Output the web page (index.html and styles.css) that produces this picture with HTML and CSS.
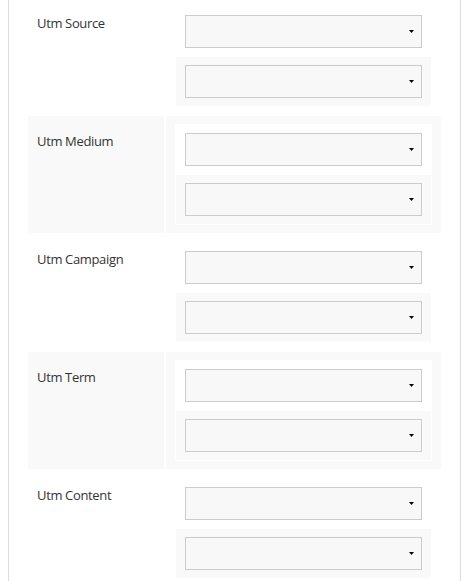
FILE: index.html
```html
<!DOCTYPE html>
<html lang="en">
<head>
<meta charset="utf-8">
<title>UTM fields</title>
<link rel="stylesheet" href="styles.css">
</head>
<body>
<div class="panel">
  <div class="rows">
    <div class="row">
      <div class="label">Utm Source</div>
      <div class="value">
        <div class="subs">
          <div class="sub"><div class="select"><svg class="caret" width="5" height="3" viewBox="0 0 5 3"><path d="M0 0H5L2.5 3Z"/></svg></div></div>
          <div class="sub"><div class="select"><svg class="caret" width="5" height="3" viewBox="0 0 5 3"><path d="M0 0H5L2.5 3Z"/></svg></div></div>
        </div>
      </div>
    </div>
    <div class="row">
      <div class="label">Utm Medium</div>
      <div class="value">
        <div class="subs">
          <div class="sub"><div class="select"><svg class="caret" width="5" height="3" viewBox="0 0 5 3"><path d="M0 0H5L2.5 3Z"/></svg></div></div>
          <div class="sub"><div class="select"><svg class="caret" width="5" height="3" viewBox="0 0 5 3"><path d="M0 0H5L2.5 3Z"/></svg></div></div>
        </div>
      </div>
    </div>
    <div class="row">
      <div class="label">Utm Campaign</div>
      <div class="value">
        <div class="subs">
          <div class="sub"><div class="select"><svg class="caret" width="5" height="3" viewBox="0 0 5 3"><path d="M0 0H5L2.5 3Z"/></svg></div></div>
          <div class="sub"><div class="select"><svg class="caret" width="5" height="3" viewBox="0 0 5 3"><path d="M0 0H5L2.5 3Z"/></svg></div></div>
        </div>
      </div>
    </div>
    <div class="row">
      <div class="label">Utm Term</div>
      <div class="value">
        <div class="subs">
          <div class="sub"><div class="select"><svg class="caret" width="5" height="3" viewBox="0 0 5 3"><path d="M0 0H5L2.5 3Z"/></svg></div></div>
          <div class="sub"><div class="select"><svg class="caret" width="5" height="3" viewBox="0 0 5 3"><path d="M0 0H5L2.5 3Z"/></svg></div></div>
        </div>
      </div>
    </div>
    <div class="row">
      <div class="label">Utm Content</div>
      <div class="value">
        <div class="subs">
          <div class="sub"><div class="select"><svg class="caret" width="5" height="3" viewBox="0 0 5 3"><path d="M0 0H5L2.5 3Z"/></svg></div></div>
          <div class="sub"><div class="select"><svg class="caret" width="5" height="3" viewBox="0 0 5 3"><path d="M0 0H5L2.5 3Z"/></svg></div></div>
        </div>
      </div>
    </div>
  </div>
</div>
</body>
</html>
```

FILE: styles.css
```css
html, body {
  margin: 0;
  padding: 0;
  background: #fff;
}
body {
  font-family: "Open Sans", "Liberation Sans", sans-serif;
  color: #333;
  overflow: hidden;
}
.panel {
  margin-left: 8px;
  width: 453px;
  box-sizing: border-box;
  min-height: 100vh;
  border-left: 1px solid #ddd;
  border-right: 1px solid #ddd;
  padding: 0 19px;
}
.rows {
  margin-top: -2px;
  display: flex;
  flex-direction: column;
  gap: 1px;
}
.row {
  display: flex;
  gap: 2px;
}
.label {
  width: 136px;
  box-sizing: border-box;
  padding: 16px 9px 0;
  font-size: 13px;
  line-height: 19px;
  letter-spacing: -0.35px;
}
.value {
  flex: 1;
  padding: 8px 9px;
}
.row:nth-child(even) > .label,
.row:nth-child(even) > .value {
  background: #f9f9f9;
}
.subs {
  border: 1px solid #fff;
  background: #fff;
}
.sub {
  padding: 8px 9px;
  background: #fff;
}
.sub + .sub {
  border-top: 1px solid #fff;
  background: #f9f9f9;
}
.select {
  height: 33px;
  box-sizing: border-box;
  border: 1px solid #ccc;
  background: #f8f8f8;
  display: flex;
  align-items: center;
  justify-content: flex-end;
  padding-right: 7px;
}
.caret {
  display: block;
  fill: #000;
}
```
